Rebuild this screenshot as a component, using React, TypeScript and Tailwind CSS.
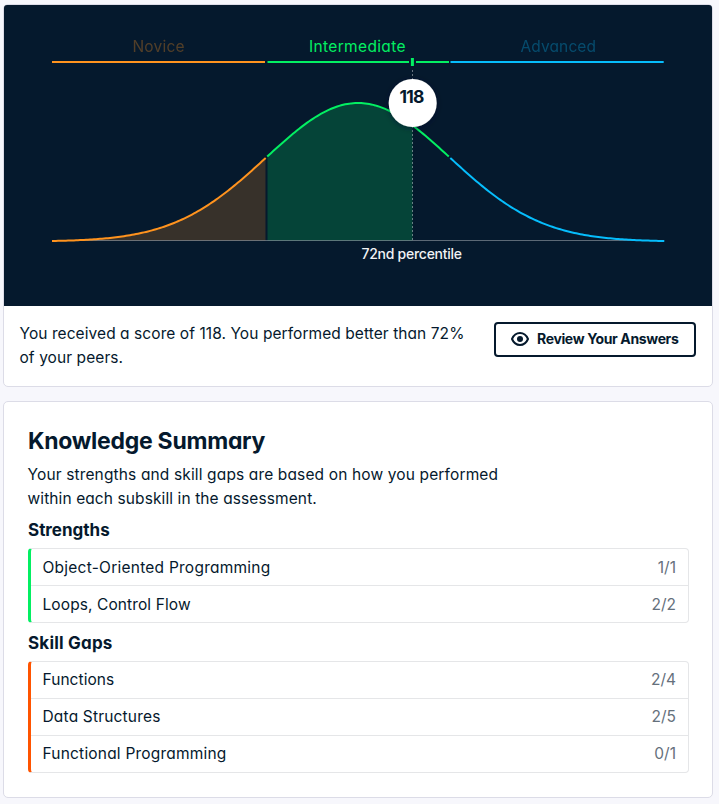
import type { ReactNode } from "react";

const CENTER = 358;
const BASE = 236;
const HEIGHT = 138;
const SIGMA = 91.8;

const bell = (x: number) => Math.exp(-((x - CENTER) ** 2) / (2 * SIGMA ** 2));
const TAIL = bell(52);

// The bell is rescaled so that its ends rest on the base line.
const curveY = (x: number) => BASE - (HEIGHT * (bell(x) - TAIL)) / (1 - TAIL);

function curve(from: number, to: number) {
  const points: string[] = [];
  for (let x = from; x < to; x += 2) points.push(`${x} ${curveY(x).toFixed(2)}`);
  points.push(`${to} ${curveY(to).toFixed(2)}`);
  return `M${points.join("L")}`;
}

const area = (from: number, to: number) => `${curve(from, to)}V235.5H${from}Z`;

function ScoreChart() {
  return (
    <svg viewBox="4 0 708 301" className="block h-[301px] w-full shrink-0 rounded-t-[3px] bg-[#05192d] text-[15.5px]">
      <defs>
        <filter id="marker-shadow" x="-50%" y="-50%" width="200%" height="200%">
          <feDropShadow dx="0" dy="1" stdDeviation="3" floodColor="#05192d" floodOpacity="0.5" />
        </filter>
      </defs>
      <text x="132.500" y="47" textLength="52" fill="#ff931e" opacity="0.3">Novice</text>
      <text x="309" y="47" textLength="96.5" fill="#03ef62">Intermediate</text>
      <text x="520.5" y="47" textLength="75.5" fill="#06bdfc" opacity="0.3">Advanced</text>
      <g strokeWidth="2" fill="none">
        <path d="M52 57H265" stroke="#ff931e" />
        <path d="M267.5 57H409M416 57H449" stroke="#03ef62" />
        <path d="M450.5 57H663.7" stroke="#06bdfc" />
        <path d="M412.4 53V61" stroke="#03ef62" strokeWidth="3" />
      </g>
      <path d={area(52, 265.5)} fill="#ff931e" opacity="0.2" />
      <path d={area(267.5, 412.5)} fill="#03ef62" opacity="0.2" />
      <path d="M52 235.5H664" stroke="#fff" opacity="0.35" />
      <g strokeWidth="2" fill="none">
        <path d={curve(52, 265.7)} stroke="#ff931e" />
        <path d={curve(267.2, 448.8)} stroke="#03ef62" />
        <path d={curve(450.3, 664.3)} stroke="#06bdfc" />
      </g>
      <path d="M412.5 65V235" stroke="#fff" strokeDasharray="2 2" opacity="0.4" />
      <circle cx="412.7" cy="98" r="24" fill="#fff" filter="url(#marker-shadow)" />
      <text x="399.5" y="98" textLength="25" fontSize="17.5" fontWeight="700" fill="#05192d">118</text>
      <text x="361.5" y="254" textLength="100.5" fontSize="14" fontWeight="500" fill="#f0f2f4">72nd percentile</text>
    </svg>
  );
}

function SkillList({ className, children }: { className: string; children: ReactNode }) {
  return (
    <ul className={`w-[661px] divide-y divide-[#e5e6e8] rounded-[4px] border border-l-[3px] border-[#e5e6e8] ${className}`}>
      {children}
    </ul>
  );
}

function Skill({ name, score, tracking }: { name: string; score: string; tracking: string }) {
  return (
    <li className="flex h-[37px] items-center justify-between pr-3 pl-[11.5px] last:h-9">
      <span className={tracking}>{name}</span>
      <span className="text-[#65707c]">{score}</span>
    </li>
  );
}

export default function App() {
  return (
    <main className="flex h-[804px] w-[719px] flex-col gap-[14px] bg-[#f7f7fc] pt-1 pl-[3px] font-['Inter',sans-serif] text-[15.5px] leading-6 text-[#05192d] [font-feature-settings:'cv11']">
      <section className="flex h-[383px] w-[710px] flex-col rounded-[5px] border border-[#dcdce7] bg-white">
        <ScoreChart />
        <div className="flex justify-between pt-4 pr-4 pl-[15.5px]">
          <p className="whitespace-nowrap">
            <span className="tracking-[0.07px]">You received a score of 118. You performed better than 72%</span>
            <br />
            <span className="tracking-[0.08px]">of your peers.</span>
          </p>
          <button className="flex h-[35px] w-[202px] items-center rounded-[4px] border-2 border-[#05192d] pl-[15px] text-[14px] font-bold whitespace-nowrap">
            <svg viewBox="0 0 18 14" className="mr-2 h-[14px] w-[18px] -translate-y-px" fill="none">
              <path d="M1 7C2.7 3 5.4 1 9 1s6.300 2 8 6c-1.700 4-4.400 6-8 6S2.700 11 1 7Z" stroke="#05192d" strokeWidth="2" strokeLinejoin="round" />
              <circle cx="9" cy="7" r="3" fill="#05192d" />
            </svg>
            <span className="pb-0.5 tracking-[-0.36px]">Review Your Answers</span>
          </button>
        </div>
      </section>

      <section className="flex h-[397px] w-[710px] flex-col rounded-[5px] border border-[#dcdce7] bg-white pt-[25px] pl-6">
        <h1 className="mb-[3px] h-[33px] text-[23px] leading-[29px] font-bold tracking-[-0.27px]">Knowledge Summary</h1>
        <p className="-ml-[0.5px] whitespace-nowrap">
          <span className="tracking-[0.14px]">Your strengths and skill gaps are based on how you performed</span>
          <br />
          <span className="tracking-[0.1px]">within each subskill in the assessment.</span>
        </p>
        <h2 className="mt-[7px] mb-1.5 text-[17px] leading-6 font-bold">Strengths</h2>
        <SkillList className="border-l-[#03ef62] [&_span]:pt-0.5">
          <Skill name="Object-Oriented Programming" score="1/1" tracking="tracking-[0.24px]" />
          <Skill name="Loops, Control Flow" score="2/2" tracking="tracking-[0.1px]" />
        </SkillList>
        <h2 className="mt-2 mb-1.5 text-[17px] leading-6 font-bold tracking-[0.2px]">Skill Gaps</h2>
        <SkillList className="border-l-[#ff5400]">
          <Skill name="Functions" score="2/4" tracking="tracking-[0.05px]" />
          <Skill name="Data Structures" score="2/5" tracking="tracking-[0.18px]" />
          <Skill name="Functional Programming" score="0/1" tracking="tracking-[0.2px]" />
        </SkillList>
      </section>
    </main>
  );
}
